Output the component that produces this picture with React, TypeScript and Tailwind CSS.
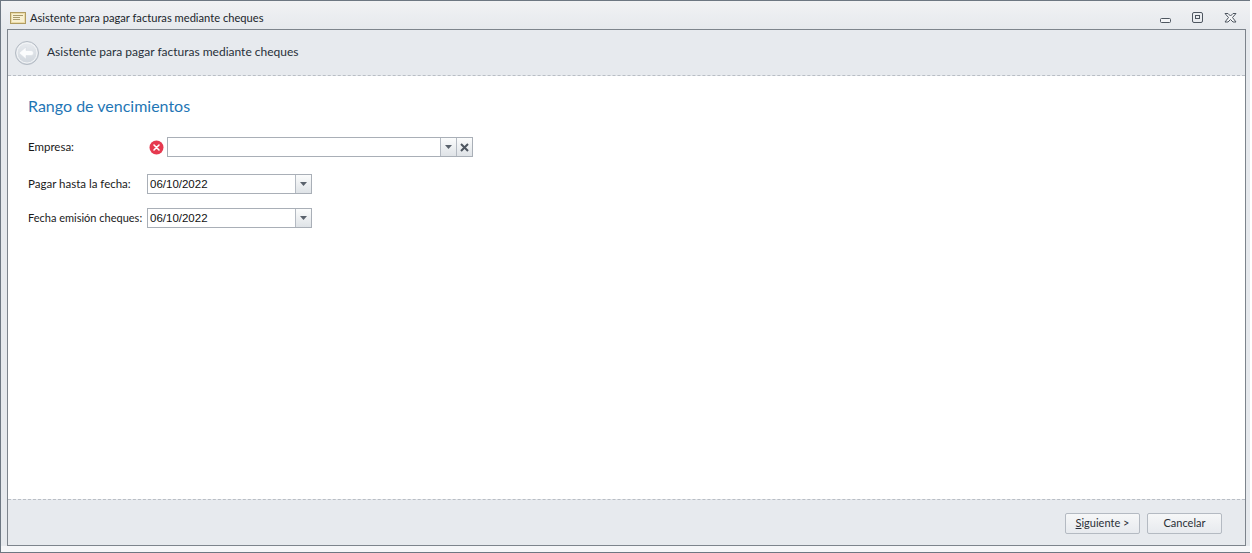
import type { ReactNode } from "react";

const font = "font-['Lato','Open_Sans',sans-serif]";

function WindowButtons() {
  return (
    <div className="flex items-center gap-[20px] pr-[13px]">
      <svg width="12" height="12" viewBox="0 0 12 12" className="mt-[3px]">
        <rect x="0.5" y="4.5" width="10" height="4" rx="1" fill="#f4f5f7" stroke="#4e5660" />
      </svg>
      <svg width="12" height="12" viewBox="0 0 12 12">
        <rect x="0.5" y="0.5" width="10" height="10" rx="1.5" fill="none" stroke="#4e5660" />
        <rect x="3.5" y="3.5" width="4" height="3" fill="none" stroke="#4e5660" />
      </svg>
      <svg width="13" height="12" viewBox="0 0 13 12">
        <path
          d="M1 1.5h3l2.5 2.5L9 1.5h3L8.5 5.5 12 10h-3L6.5 7.5 4 10H1l3.5-4.5z"
          fill="#f4f5f7"
          stroke="#4e5660"
          strokeLinejoin="round"
        />
      </svg>
    </div>
  );
}

function AppIcon() {
  return (
    <svg width="16" height="12" viewBox="0 0 16 12">
      <rect x="0.5" y="0.5" width="15" height="11" fill="#ecdca8" stroke="#b09c62" />
      <rect x="2" y="2" width="12" height="8" fill="#f8f0d2" />
      <path d="M3 3.5h10M3 5.5h7M3 7.5h7" stroke="#a89a6c" />
    </svg>
  );
}

function BackButton() {
  return (
    <svg width="26" height="26" viewBox="0 0 26 26">
      <defs>
        <linearGradient id="backFill" x1="0" y1="0" x2="0" y2="1">
          <stop offset="0" stopColor="#e9ecf0" />
          <stop offset="1" stopColor="#cfd5dc" />
        </linearGradient>
      </defs>
      <circle cx="13" cy="13" r="11.5" fill="url(#backFill)" stroke="#b4bbc4" />
      <circle cx="13" cy="13" r="10" fill="none" stroke="#f3f5f7" />
      <path d="M5 13l7-6v3.5h5a2.5 2.5 0 0 1 0 5h-5V19z" fill="#fbfcfd" stroke="#d5dae0" strokeWidth="0.5" />
    </svg>
  );
}

function DropButton() {
  return (
    <div className="w-[16px] h-full flex items-center justify-center border-l border-[#b4bac2] bg-gradient-to-b from-[#fbfcfc] to-[#dfe3e7]">
      <svg width="7" height="4" viewBox="0 0 7 4">
        <path d="M0 0h7L3.5 4z" fill="#5a626c" />
      </svg>
    </div>
  );
}

function DateField({ value }: { value: string }) {
  return (
    <div className="w-[165px] h-[20px] flex bg-white border border-[#a9afb7]">
      <span className="flex-1 pl-[2px] font-['Liberation_Sans',sans-serif] text-[11.5px] leading-[18px] text-[#111]">{value}</span>
      <DropButton />
    </div>
  );
}

function FooterButton({ children }: { children: ReactNode }) {
  return (
    <button className="w-[75px] h-[21px] rounded-[2px] border border-[#b4bac2] bg-gradient-to-b from-[#f6f7f8] to-[#e7eaee] text-[11px] leading-[18px] text-[#2a2f36]">
      {children}
    </button>
  );
}

export default function App() {
  return (
    <div className={`${font} w-[1250px] h-[553px] flex flex-col overflow-hidden bg-[#e6e9ed] border-t border-l border-b border-[#6d7782]`}>
      {/* Title bar */}
      <div className="h-[28px] shrink-0 flex items-center justify-between bg-gradient-to-b from-[#f1f2f4] to-[#e6e9ed] pt-[6px] pl-[9px]">
        <div className="flex items-center gap-[4px]">
          <AppIcon />
          <span className="text-[11.15px] text-[#20252b]">Asistente para pagar facturas mediante cheques</span>
        </div>
        <WindowButtons />
      </div>

      {/* Client area */}
      <div className="flex-1 ml-[6px] mr-[4px] flex flex-col border border-[#7d848c] bg-white">
        <div className="h-[46px] shrink-0 flex items-center gap-[7px] pl-[6px] bg-[#e7eaee] border-b border-dashed border-[#b9bec5]">
          <BackButton />
          <span className="text-[12px] leading-[16px] mb-[2px] text-[#27303a]">Asistente para pagar facturas mediante cheques</span>
        </div>

        <div className="flex-1 pl-[20px] pt-[20px]">
          <h1 className="text-[16px] leading-[20px] text-[#1f76b5]">Rango de vencimientos</h1>

          <div className="mt-[21px] flex items-center h-[20px]">
            <span className="w-[121px] text-[11.5px] text-[#1a1a1a]">Empresa:</span>
            <span className="w-[18px] flex justify-start">
              <svg width="15" height="15" viewBox="0 0 15 15">
                <circle cx="7.5" cy="7.5" r="7" fill="#e6394f" />
                <path d="M5 5l5 5M10 5l-5 5" stroke="#fff" strokeWidth="1.6" strokeLinecap="round" />
              </svg>
            </span>
            <div className="w-[306px] h-[20px] flex bg-white border border-[#a9afb7]">
              <div className="flex-1" />
              <DropButton />
              <div className="w-[16px] h-full flex items-center justify-center border-l border-[#b4bac2] bg-gradient-to-b from-[#fbfcfc] to-[#dfe3e7]">
                <svg width="9" height="9" viewBox="0 0 9 9">
                  <path d="M1 1l7 7M8 1L1 8" stroke="#4e5660" strokeWidth="2" />
                </svg>
              </div>
            </div>
          </div>

          <div className="mt-[17px] flex items-center h-[20px]">
            <span className="w-[119px] text-[11.5px] text-[#1a1a1a]">Pagar hasta la fecha:</span>
            <DateField value="06/10/2022" />
          </div>

          <div className="mt-[14px] flex items-center h-[20px]">
            <span className="w-[119px] text-[11px] text-[#1a1a1a] whitespace-nowrap">Fecha emisión cheques:</span>
            <DateField value="06/10/2022" />
          </div>
        </div>

        <div className="h-[46px] shrink-0 flex items-center justify-end gap-[7px] pr-[23px] pt-[1px] bg-[#e7eaee] border-t border-dashed border-[#b9bec5]">
          <FooterButton>
            <span className="underline">S</span>iguiente &gt;
          </FooterButton>
          <FooterButton>Cancelar</FooterButton>
        </div>
      </div>

      {/* Bottom window edge */}
      <div className="h-[6px] shrink-0 bg-[#f5f6f8]" />
    </div>
  );
}
